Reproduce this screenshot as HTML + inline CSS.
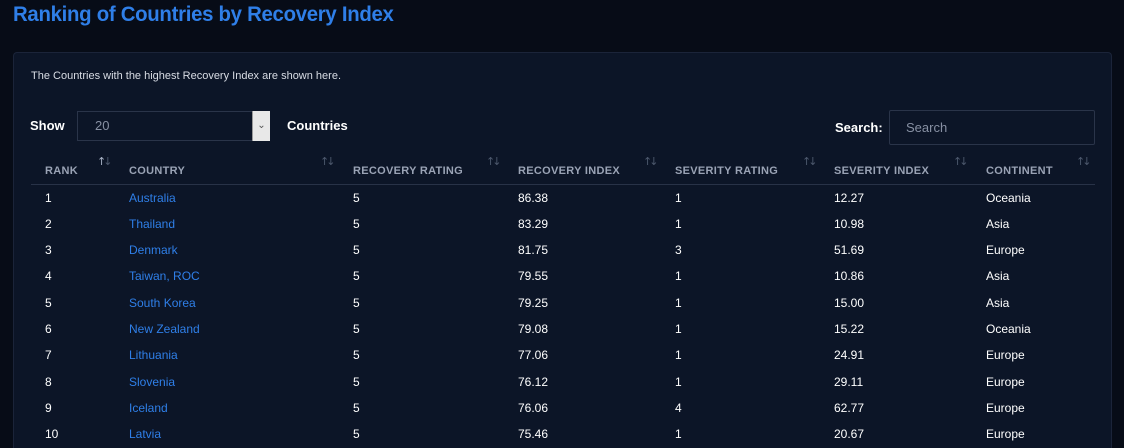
<!DOCTYPE html>
<html style="overflow:hidden;height:448px"><head><style>
body{margin:0;width:1124px;height:448px;background:#070c17;font-family:"Liberation Sans",sans-serif;overflow:hidden;position:relative;color:#fff}
h1{position:absolute;left:13px;top:3px;margin:0;font-size:21px;font-weight:bold;color:#2f7fe8;letter-spacing:-0.3px;transform:scaleX(0.97);transform-origin:left}
.card{position:absolute;left:13px;top:52px;width:1097px;height:395px;background:#0c1527;border:1px solid #1b2439;border-bottom:none;border-radius:4px 4px 0 0}
.abs{position:absolute;white-space:nowrap}
.desc{left:31px;top:70px;font-size:11px;color:#d8dce4}
.lbl{font-size:13px;font-weight:bold;color:#fff}
.sel{left:77px;top:111px;width:193px;height:30px;border:1px solid #2a3449;box-sizing:border-box;color:#8790a3;font-size:13px;line-height:28px;padding-left:17px}
.sel .btn{position:absolute;right:-1px;top:-1px;width:17px;height:30px;background:#e8e8e8;border-left:1px solid #999;color:#555;font-size:10px;text-align:center;line-height:30px}
.search{left:889px;top:110px;width:206px;height:35px;border:1px solid #2a3449;box-sizing:border-box;color:#8790a3;font-size:13px;line-height:33px;padding-left:16px;border-radius:2px}
.th{top:165px;font-size:11px;font-weight:bold;color:#9aa3b5;letter-spacing:0.3px}
.ar{top:155px;font-size:11px;color:#4d586d;letter-spacing:-3px;font-family:"DejaVu Sans",sans-serif}
.line{left:31px;top:184px;width:1064px;height:1px;background:#283247}
.td{font-size:12px;color:#fff}
.c{color:#2f7fe8}
</style></head><body>
<h1>Ranking of Countries by Recovery Index</h1>
<div class="card"></div>
<div class="abs desc">The Countries with the highest Recovery Index are shown here.</div>
<div class="abs lbl" style="left:30px;top:118px">Show</div>
<div class="abs sel">20<div class="btn">&#8964;</div></div>
<div class="abs lbl" style="left:287px;top:118px">Countries</div>
<div class="abs lbl" style="left:835px;top:120px">Search:</div>
<div class="abs search">Search</div>
<div class="abs th" style="left:45px">RANK</div>
<div class="abs th" style="left:129px">COUNTRY</div>
<div class="abs th" style="left:353px">RECOVERY RATING</div>
<div class="abs th" style="left:518px">RECOVERY INDEX</div>
<div class="abs th" style="left:675px">SEVERITY RATING</div>
<div class="abs th" style="left:834px">SEVERITY INDEX</div>
<div class="abs th" style="left:986px">CONTINENT</div>
<div class="abs ar" style="left:97px"><span style="color:#a9b3c6">↑</span>↓</div>
<div class="abs ar" style="left:320px">↑↓</div>
<div class="abs ar" style="left:486px">↑↓</div>
<div class="abs ar" style="left:643px">↑↓</div>
<div class="abs ar" style="left:802px">↑↓</div>
<div class="abs ar" style="left:953px">↑↓</div>
<div class="abs ar" style="left:1076px">↑↓</div>
<div class="abs line"></div>
<div id="rows"></div>
<script>
var d=[[1,"Australia",5,"86.38",1,"12.27","Oceania"],[2,"Thailand",5,"83.29",1,"10.98","Asia"],[3,"Denmark",5,"81.75",3,"51.69","Europe"],[4,"Taiwan, ROC",5,"79.55",1,"10.86","Asia"],[5,"South Korea",5,"79.25",1,"15.00","Asia"],[6,"New Zealand",5,"79.08",1,"15.22","Oceania"],[7,"Lithuania",5,"77.06",1,"24.91","Europe"],[8,"Slovenia",5,"76.12",1,"29.11","Europe"],[9,"Iceland",5,"76.06",4,"62.77","Europe"],[10,"Latvia",5,"75.46",1,"20.67","Europe"]];
var x=[45,129,353,518,675,834,986],h="";
d.forEach(function(r,i){var y=190.5+i*26.3;r.forEach(function(v,j){h+='<div class="abs td'+(j==1?' c':'')+'" style="left:'+x[j]+'px;top:'+y+'px">'+v+'</div>';});});
document.getElementById("rows").innerHTML=h;
</script>
</body></html>
